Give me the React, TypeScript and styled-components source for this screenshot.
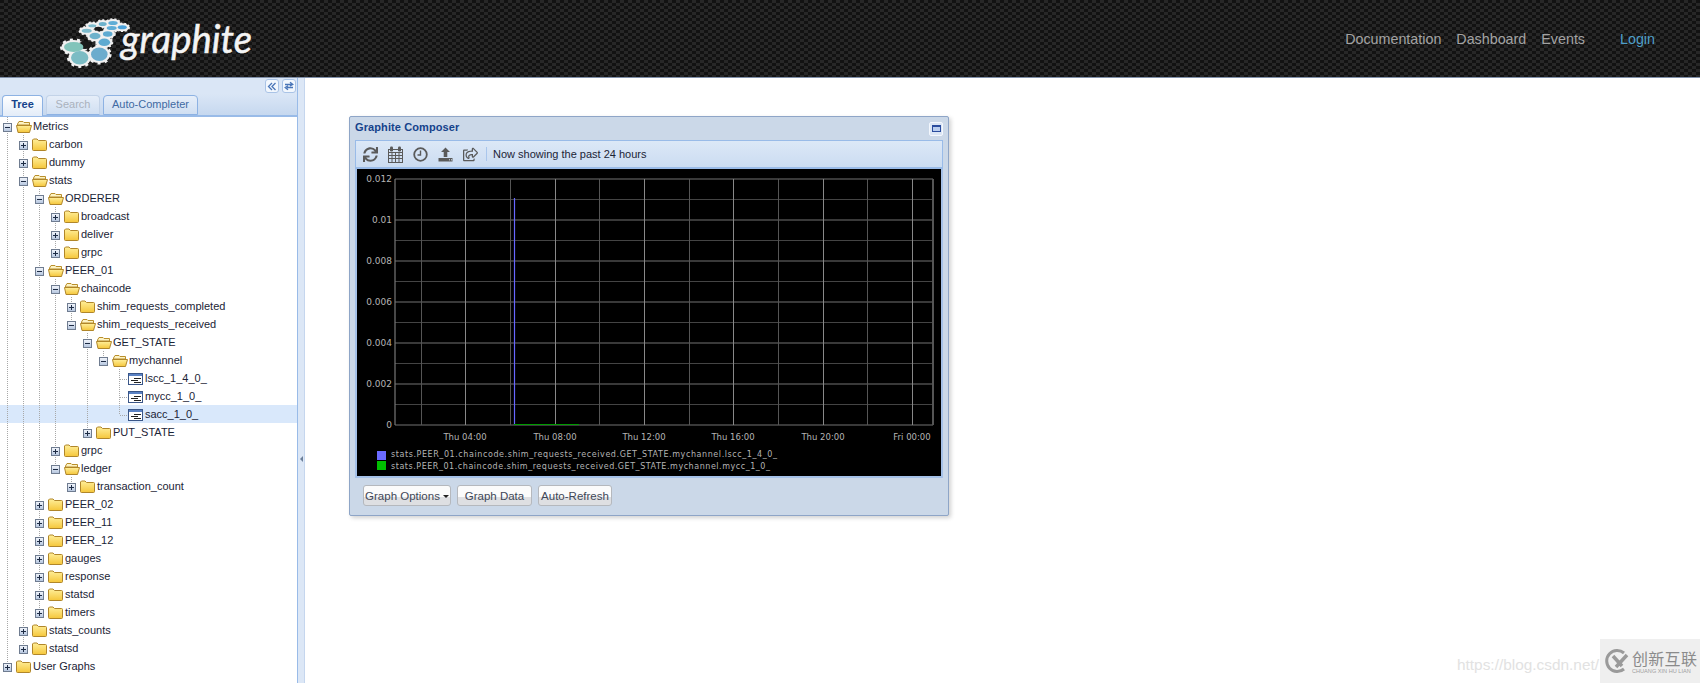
import React from 'react';
import styled, { createGlobalStyle } from 'styled-components';
import { FaSync, FaRegShareSquare } from 'react-icons/fa';

const GlobalStyle = createGlobalStyle`
  html, body {
    margin: 0;
    padding: 0;
    height: 100%;
    overflow: hidden;
    background: #fff;
    font-family: "Liberation Sans", Arial, sans-serif;
  }
`;

const Page = styled.div`
  position: relative;
  width: 1700px;
  height: 683px;
  display: flex;
  flex-direction: column;
  overflow: hidden;
`;

const Header = styled.header`
  height: 77px;
  flex: none;
  display: flex;
  align-items: center;
  justify-content: space-between;
  border-bottom: 1px solid #7f8fa9;
  background-color: #1c1c1c;
  background-image: repeating-conic-gradient(#272727 0 25%, #121212 0 50%);
  background-size: 8px 6px;
`;

const LogoSvg = styled.svg`
  width: 260px;
  height: 76px;
  flex: none;
`;

const Nav = styled.nav`
  display: flex;
  align-items: center;
  margin-right: 45px;
`;

const NavLink = styled.a<{ $login?: boolean }>`
  font-size: 14.3px;
  color: ${(p) => (p.$login ? '#4f9fc9' : '#a3a3a3')};
  margin-left: ${(p) => (p.$login ? '35px' : '15px')};
`;

const Body = styled.div`
  flex: 1;
  display: flex;
  min-height: 0;
`;

const Sidebar = styled.aside`
  width: 297px;
  flex: none;
  display: flex;
  flex-direction: column;
  border-right: 1px solid #99bbe8;
  background: #fff;
`;

const ToolStrip = styled.div`
  height: 16px;
  flex: none;
  display: flex;
  justify-content: flex-end;
  align-items: flex-start;
  gap: 3px;
  padding: 1px 1px 0 0;
  box-sizing: border-box;
  background: #dae6f6;
`;

const ToolButton = styled.div`
  width: 14px;
  height: 14px;
  box-sizing: border-box;
  border: 1px solid #a9c3e6;
  border-radius: 3px;
  background: #f2f7fd;
  display: flex;
  align-items: center;
  justify-content: center;
`;

const TabStrip = styled.div`
  height: 23px;
  flex: none;
  display: flex;
  align-items: flex-end;
  gap: 3px;
  padding-left: 2px;
  box-sizing: border-box;
  border-bottom: 2px solid #99bbe8;
  background: linear-gradient(#dae6f6, #c6d8ef);
`;

const Tab = styled.div<{ $active?: boolean; $disabled?: boolean; $w: number }>`
  width: ${(p) => p.$w}px;
  height: ${(p) => (p.$active ? 21 : 20)}px;
  box-sizing: border-box;
  border: 1px solid ${(p) => (p.$disabled ? '#c3d3e8' : '#8db2e3')};
  border-bottom: ${(p) => (p.$active ? 'none' : '1px solid #8db2e3')};
  border-radius: 4px 4px 0 0;
  text-align: center;
  font-size: 11px;
  line-height: 17px;
  font-weight: ${(p) => (p.$active ? 700 : 400)};
  color: ${(p) => (p.$active ? '#15428b' : p.$disabled ? '#aab2bd' : '#416aa3')};
  background: ${(p) =>
    p.$active ? 'linear-gradient(#fff, #e3ecf8)' : 'linear-gradient(#e6eef9, #d0dff2)'};
  margin-bottom: ${(p) => (p.$active ? -1 : 0)}px;
`;

const Tree = styled.div`
  flex: 1;
  overflow: hidden;
`;

const Row = styled.div<{ $selected?: boolean }>`
  height: 18px;
  display: flex;
  align-items: stretch;
  background: ${(p) => (p.$selected ? '#d9e8fb' : 'transparent')};
`;

const IndentCell = styled.div<{ $line: boolean }>`
  width: 16px;
  flex: none;
  background-image: ${(p) =>
    p.$line ? 'linear-gradient(#a8a8a8 50%, transparent 50%)' : 'none'};
  background-size: 1px 2px;
  background-position: 7px 0;
  background-repeat: repeat-y;
`;

const IconSvg = styled.svg`
  width: 16px;
  height: 18px;
  flex: none;
  display: block;
`;

const RowLabel = styled.span`
  font-size: 11px;
  line-height: 18px;
  color: #1b2436;
  margin-left: 1px;
  white-space: nowrap;
`;

const Splitter = styled.div`
  width: 6px;
  flex: none;
  display: flex;
  align-items: center;
  justify-content: center;
  background: #dce7f6;
  border-right: 1px solid #c5d6ee;
`;

const SplitArrow = styled.div`
  width: 0;
  height: 0;
  margin-top: 156px;
  border-top: 3px solid transparent;
  border-bottom: 3px solid transparent;
  border-right: 3px solid #6b7f99;
`;

const Main = styled.main`
  flex: 1;
  background: #fff;
  padding: 38px 0 0 44px;
`;

const Win = styled.section`
  width: 600px;
  height: 400px;
  box-sizing: border-box;
  border: 1px solid #8ea5c7;
  border-radius: 2px;
  background: #cbd8e8;
  box-shadow: 2px 2px 4px rgba(0, 0, 0, 0.18);
  padding: 0 5px;
`;

const WinHeader = styled.div`
  height: 23px;
  display: flex;
  align-items: center;
  justify-content: space-between;
`;

const WinTitle = styled.div`
  font-size: 11px;
  font-weight: 700;
  color: #15428b;
  letter-spacing: 0.1px;
  margin-top: -4px;
`;

const WinTool = styled.div`
  width: 14px;
  height: 14px;
  box-sizing: border-box;
  border: 1px solid #f3f7fd;
  border-radius: 2px;
  background: #dbe6f5;
  display: flex;
  align-items: center;
  justify-content: center;
`;

const WinToolGlyph = styled.div`
  width: 9px;
  height: 7px;
  box-sizing: border-box;
  border: 1px solid #2a4c9e;
  border-top-width: 2px;
  background: #b9cdee;
`;

const ToolBar = styled.div`
  height: 29px;
  box-sizing: border-box;
  display: flex;
  align-items: center;
  padding-left: 2px;
  border: 1px solid #99bbe8;
  border-bottom-width: 2px;
  background: linear-gradient(#dce8f7, #cbdcf1);
  color: #5a5a5a;
`;

const ToolIcon = styled.div`
  width: 25px;
  flex: none;
  display: flex;
  justify-content: center;
  align-items: center;
`;

const ToolSep = styled.div`
  width: 1px;
  height: 14px;
  margin: 0 6px 0 3px;
  background: #a9c6ec;
`;

const ToolText = styled.span`
  font-size: 11px;
  color: #1b2436;
`;

const ChartFrame = styled.div`
  height: 309px;
  box-sizing: border-box;
  border: solid #a5c1e8;
  border-width: 0 2px 2px 2px;
  background: #000;
`;

const ChartSvg = styled.svg`
  display: block;
  width: 584px;
  height: 307px;
`;

const ButtonRow = styled.div`
  display: flex;
  gap: 6px;
  padding: 7px 0 0 8px;
`;

const Button = styled.button<{ $w: number }>`
  width: ${(p) => p.$w}px;
  height: 21px;
  padding: 0;
  box-sizing: border-box;
  border: 1px solid #b5b8bd;
  border-radius: 3px;
  background: linear-gradient(#fbfbfb 0 60%, #dedfe2 60% 100%);
  font-family: "Liberation Sans", Arial, sans-serif;
  font-size: 11.5px;
  white-space: nowrap;
  color: #3f4757;
  display: flex;
  align-items: center;
  justify-content: center;
  gap: 3px;
`;

const Caret = styled.span`
  width: 0;
  height: 0;
  margin-top: 2px;
  border-left: 3px solid transparent;
  border-right: 3px solid transparent;
  border-top: 3px solid #222;
`;

const WatermarkText = styled.div`
  position: absolute;
  left: 1457px;
  top: 655px;
  font-size: 15.4px;
  line-height: 20px;
  color: #e2e2e2;
`;

const WatermarkBox = styled.div`
  position: absolute;
  right: 0;
  bottom: 0;
  width: 100px;
  height: 44px;
  display: flex;
  align-items: center;
  gap: 3px;
  padding-left: 3px;
  box-sizing: border-box;
  background: #efefef;
`;

const WatermarkStack = styled.div`
  display: flex;
  flex-direction: column;
  align-items: flex-start;
  gap: 2px;
  margin-top: 2px;
`;

const WatermarkCn = styled.div`
  font-family: "Noto Sans CJK SC", sans-serif;
  font-size: 16px;
  line-height: 15px;
  letter-spacing: 0.3px;
  color: #8b8b8b;
`;

const WatermarkEn = styled.div`
  font-size: 5.6px;
  line-height: 6px;
  white-space: nowrap;
  color: #a0a0a0;
`;

type Node = { name: string; open?: boolean; leaf?: boolean; children?: Node[] };

const folders = (...names: string[]): Node[] => names.map((name) => ({ name }));

const treeData: Node[] = [
  {
    name: 'Metrics',
    open: true,
    children: [
      { name: 'carbon' },
      { name: 'dummy' },
      {
        name: 'stats',
        open: true,
        children: [
          { name: 'ORDERER', open: true, children: folders('broadcast', 'deliver', 'grpc') },
          {
            name: 'PEER_01',
            open: true,
            children: [
              {
                name: 'chaincode',
                open: true,
                children: [
                  { name: 'shim_requests_completed' },
                  {
                    name: 'shim_requests_received',
                    open: true,
                    children: [
                      {
                        name: 'GET_STATE',
                        open: true,
                        children: [
                          {
                            name: 'mychannel',
                            open: true,
                            children: [
                              { name: 'lscc_1_4_0_', leaf: true },
                              { name: 'mycc_1_0_', leaf: true },
                              { name: 'sacc_1_0_', leaf: true },
                            ],
                          },
                        ],
                      },
                      { name: 'PUT_STATE' },
                    ],
                  },
                ],
              },
              { name: 'grpc' },
              { name: 'ledger', open: true, children: folders('transaction_count') },
            ],
          },
          ...folders('PEER_02', 'PEER_11', 'PEER_12', 'gauges', 'response', 'statsd', 'timers'),
        ],
      },
      { name: 'stats_counts' },
      { name: 'statsd' },
    ],
  },
  { name: 'User Graphs' },
];

const Elbow = ({ last, leaf, open }: { last: boolean; leaf?: boolean; open?: boolean }) => (
  <IconSvg viewBox="0 0 16 18">
    <line x1="7.5" y1="0" x2="7.5" y2={last ? 9 : 18} stroke="#a8a8a8" strokeDasharray="1 1" />
    {leaf && <line x1="8" y1="10.5" x2="16" y2="10.5" stroke="#a8a8a8" strokeDasharray="1 1" />}
    {!leaf && (
      <>
        <defs>
          <linearGradient id="expander" x1="0" y1="0" x2="0" y2="1">
            <stop offset="0" stopColor="#f4f7fc" />
            <stop offset="1" stopColor="#b3c4de" />
          </linearGradient>
        </defs>
        <rect x="3.5" y="6.5" width="8" height="8" fill="url(#expander)" stroke="#6f7c90" />
        <line x1="5" y1="10.5" x2="10" y2="10.5" stroke="#1d2b44" />
        {!open && <line x1="7.5" y1="8" x2="7.5" y2="13" stroke="#1d2b44" />}
      </>
    )}
  </IconSvg>
);

const FolderIcon = ({ open }: { open?: boolean }) => (
  <IconSvg viewBox="0 0 16 18">
    <defs>
      <linearGradient id="folder" x1="0" y1="0" x2="0" y2="1">
        <stop offset="0" stopColor="#ffef9a" />
        <stop offset="1" stopColor="#f5c63a" />
      </linearGradient>
    </defs>
    {open ? (
      <>
        <path d="M1.5 7 L3 4.5 H7 L8 5.5 H13.5 V8 H1.5 Z" fill="#fdf3c4" stroke="#b98f2b" />
        <path d="M0.5 8.5 H15.5 L13.5 15.5 H2 Z" fill="url(#folder)" stroke="#b0862a" />
      </>
    ) : (
      <path
        d="M0.5 5 L1.5 4 H5 L6.5 5.5 H13.5 Q14.5 5.5 14.5 6.5 V14.5 Q14.5 15.5 13.5 15.5 H1.5 Q0.5 15.5 0.5 14.5 Z"
        fill="url(#folder)"
        stroke="#b0862a"
      />
    )}
  </IconSvg>
);

const LeafIcon = () => (
  <IconSvg viewBox="0 0 16 18">
    <rect x="0.5" y="4.5" width="14" height="11" fill="#fff" stroke="#3a5688" />
    <rect x="1" y="5" width="13" height="2" fill="#5a82c4" />
    <path d="M6 9.5 H13 M3 11.5 H10 M6 13.5 H13" stroke="#222" fill="none" />
  </IconSvg>
);

const TreeRows = ({ nodes, trail }: { nodes: Node[]; trail: boolean[] }) => (
  <>
    {nodes.map((node, i) => {
      const last = i === nodes.length - 1;
      return (
        <React.Fragment key={node.name + i}>
          <Row $selected={node.name === 'sacc_1_0_'}>
            {trail.map((line, idx) => (
              <IndentCell key={idx} $line={line} />
            ))}
            <Elbow last={last} leaf={node.leaf} open={node.open} />
            {node.leaf ? <LeafIcon /> : <FolderIcon open={node.open} />}
            <RowLabel>{node.name}</RowLabel>
          </Row>
          {node.children && <TreeRows nodes={node.children} trail={[...trail, !last]} />}
        </React.Fragment>
      );
    })}
  </>
);

const gears = [
  { cx: 73.7, cy: 46, rx: 9.7, ry: 5, fill: '#82c4ba', big: true },
  { cx: 79.7, cy: 56.7, rx: 8.7, ry: 6.7, fill: '#7cbcc4', big: true },
  { cx: 99.3, cy: 53.3, rx: 8.3, ry: 6.7, fill: '#6caccd', big: true },
  { cx: 104.3, cy: 41.3, rx: 5.8, ry: 3.7, fill: '#5eaad1' },
  { cx: 95, cy: 35, rx: 5.5, ry: 3.3, fill: '#6db2cc' },
  { cx: 107.7, cy: 33, rx: 4.8, ry: 2.7, fill: '#5eaad1' },
  { cx: 86.7, cy: 29.7, rx: 5, ry: 2, fill: '#7dbbcc' },
  { cx: 111.7, cy: 27, rx: 5, ry: 2, fill: '#5fadd6' },
  { cx: 92.3, cy: 24.7, rx: 4, ry: 1.5, fill: '#7dbbcc' },
  { cx: 102.7, cy: 23, rx: 4, ry: 2, fill: '#6db2cc' },
  { cx: 113, cy: 22, rx: 4.7, ry: 2, fill: '#5fadd6' },
  { cx: 122.3, cy: 26.3, rx: 4.5, ry: 2, fill: '#4ca2da' },
];

const Logo = () => (
  <LogoSvg viewBox="0 0 260 76">
    {gears.map((g, i) => (
      <ellipse
        key={i}
        cx={g.cx}
        cy={g.cy}
        rx={g.rx + 2.5}
        ry={g.ry + 2}
        fill="#f0f0f0"
        stroke="#f0f0f0"
        strokeWidth={g.big ? 3 : 1.5}
        strokeDasharray={g.big ? '3 4' : '2 2'}
      />
    ))}
    <ellipse cx="85" cy="44" rx="6" ry="4" fill="#1a1a1a" />
    <ellipse cx="98.3" cy="27.7" rx="4" ry="2" fill="#1a1a1a" />
    {gears.map((g, i) => (
      <ellipse key={i} cx={g.cx} cy={g.cy} rx={g.rx} ry={g.ry} fill={g.fill} />
    ))}
    <text
      x="121"
      y="52"
      fontFamily="Lato, sans-serif"
      fontStyle="italic"
      fontSize="38"
      fill="#f4f4f4"
      stroke="#f4f4f4"
      strokeWidth="0.5"
      textLength="131"
      lengthAdjust="spacingAndGlyphs"
    >
      graphite
    </text>
  </LogoSvg>
);

const CollapseGlyph = () => (
  <svg width="10" height="9" viewBox="0 0 10 9">
    <path d="M5 1 L1.5 4.5 L5 8 M8.5 1 L5 4.5 L8.5 8" fill="none" stroke="#4a76b8" strokeWidth="1.3" />
  </svg>
);

const RefreshGlyph = () => (
  <svg width="10" height="10" viewBox="0 0 10 10">
    <path d="M1 3.5 H7.5 M6 1.2 L8.8 3.5 L6 5 M9 6.5 H2.5 M4 4.8 L1.2 6.5 L4 8.8" fill="none" stroke="#4a76b8" strokeWidth="1.3" />
  </svg>
);

const CalendarIcon = () => (
  <svg width="15" height="17" viewBox="0 0 15 17" fill="none" stroke="#5a5a5a">
    <rect x="0.5" y="3.5" width="14" height="13" />
    <path d="M0.5 6.5 H14.5 M0.5 9.5 H14.5 M0.5 12.5 H14.5 M4 6.5 V16.5 M7.5 6.5 V16.5 M11 6.5 V16.5" />
    <rect x="2" y="0.5" width="3" height="5" rx="1.2" fill="#5a5a5a" stroke="none" />
    <rect x="10" y="0.5" width="3" height="5" rx="1.2" fill="#5a5a5a" stroke="none" />
  </svg>
);

const ClockIcon = () => (
  <svg width="15" height="15" viewBox="0 0 15 15" fill="none" stroke="#5a5a5a">
    <circle cx="7.5" cy="7.5" r="6.3" strokeWidth="1.8" />
    <path d="M7.5 3.5 V8 H4.5" strokeWidth="1.4" />
  </svg>
);

const UploadIcon = () => (
  <svg width="15" height="15" viewBox="0 0 15 15" fill="#5a5a5a">
    <path d="M7.5 0.5 L12 5 H9.3 V10 H5.7 V5 H3 Z" />
    <path d="M0.5 11 H14.5 V14.5 H0.5 Z" />
    <rect x="11" y="12.3" width="1" height="1" fill="#dce8f7" />
    <rect x="13" y="12.3" width="1" height="1" fill="#dce8f7" />
  </svg>
);

const ys = [0, 1, 2, 3, 4, 5, 6].map((i) => 10 + 41 * i);
const minorYs = [0, 1, 2, 3, 4, 5].map((i) => 30.5 + 41 * i);
const majorXs = [108, 198, 287, 376, 466, 555];
const minorXs = [64, 153, 242, 332, 421, 510];
const yLabels = ['0.012', '0.01', '0.008', '0.006', '0.004', '0.002', '0'];
const xLabels = ['Thu 04:00', 'Thu 08:00', 'Thu 12:00', 'Thu 16:00', 'Thu 20:00', 'Fri 00:00'];

const Chart = () => (
  <ChartSvg viewBox="0 0 584 307">
    {minorYs.map((y) => (
      <line key={y} x1="38" x2="576" y1={y} y2={y} stroke="#444" />
    ))}
    {ys.map((y) => (
      <line key={y} x1="38" x2="576" y1={y} y2={y} stroke="#4c4c4c" strokeWidth="1.4" />
    ))}
    {minorXs.map((x) => (
      <line key={x} x1={x + 0.5} x2={x + 0.5} y1="10" y2="256" stroke="#555" />
    ))}
    {majorXs.map((x) => (
      <line key={x} x1={x + 0.5} x2={x + 0.5} y1="10" y2="256" stroke="#888" />
    ))}
    <line x1="38" x2="38" y1="10" y2="256" stroke="#777" strokeWidth="1.2" />
    <line x1="576" x2="576" y1="10" y2="256" stroke="#555" strokeWidth="2" />
    <line x1="157.5" x2="157.5" y1="29" y2="256" stroke="#6666ff" strokeWidth="1.2" />
    <line x1="157" x2="222" y1="255.5" y2="255.5" stroke="#009a00" />
    <g fontFamily='"DejaVu Sans", sans-serif' fill="#b4b4b4">
      {yLabels.map((label, i) => (
        <text key={label} x="35" y={ys[i] + 3} fontSize="9" textAnchor="end">
          {label}
        </text>
      ))}
      {xLabels.map((label, i) => (
        <text key={label} x={majorXs[i]} y="271" fontSize="8.5" textAnchor="middle">
          {label}
        </text>
      ))}
      <rect x="20" y="282" width="9" height="9" fill="#6a6aff" />
      <rect x="20" y="292" width="9" height="9" fill="#00c000" />
      <text x="34" y="288" fontSize="8" textLength="386">
        stats.PEER_01.chaincode.shim_requests_received.GET_STATE.mychannel.lscc_1_4_0_
      </text>
      <text x="34" y="300" fontSize="8" textLength="379">
        stats.PEER_01.chaincode.shim_requests_received.GET_STATE.mychannel.mycc_1_0_
      </text>
    </g>
  </ChartSvg>
);

const WatermarkLogo = () => (
  <svg width="26" height="26" viewBox="0 0 26 26" fill="none" stroke="#9a9a9a" strokeWidth="3">
    <path d="M21 5 A10.5 10.5 0 1 0 21 21" />
    <path d="M10 8 L19 18 M24 7 L13 19" strokeWidth="3.5" />
  </svg>
);

const App = () => (
  <Page>
    <GlobalStyle />
    <Header>
      <Logo />
      <Nav>
        <NavLink>Documentation</NavLink>
        <NavLink>Dashboard</NavLink>
        <NavLink>Events</NavLink>
        <NavLink $login>Login</NavLink>
      </Nav>
    </Header>
    <Body>
      <Sidebar>
        <ToolStrip>
          <ToolButton>
            <CollapseGlyph />
          </ToolButton>
          <ToolButton>
            <RefreshGlyph />
          </ToolButton>
        </ToolStrip>
        <TabStrip>
          <Tab $active $w={41}>Tree</Tab>
          <Tab $disabled $w={54}>Search</Tab>
          <Tab $w={95}>Auto-Completer</Tab>
        </TabStrip>
        <Tree>
          <TreeRows nodes={treeData} trail={[]} />
        </Tree>
      </Sidebar>
      <Splitter>
        <SplitArrow />
      </Splitter>
      <Main>
        <Win>
          <WinHeader>
            <WinTitle>Graphite Composer</WinTitle>
            <WinTool>
              <WinToolGlyph />
            </WinTool>
          </WinHeader>
          <ToolBar>
            <ToolIcon>
              <FaSync size={15} />
            </ToolIcon>
            <ToolIcon>
              <CalendarIcon />
            </ToolIcon>
            <ToolIcon>
              <ClockIcon />
            </ToolIcon>
            <ToolIcon>
              <UploadIcon />
            </ToolIcon>
            <ToolIcon>
              <FaRegShareSquare size={15} />
            </ToolIcon>
            <ToolSep />
            <ToolText>Now showing the past 24 hours</ToolText>
          </ToolBar>
          <ChartFrame>
            <Chart />
          </ChartFrame>
          <ButtonRow>
            <Button $w={88}>
              Graph Options
              <Caret />
            </Button>
            <Button $w={75}>Graph Data</Button>
            <Button $w={74}>Auto-Refresh</Button>
          </ButtonRow>
        </Win>
      </Main>
    </Body>
    <WatermarkText>https://blog.csdn.net/</WatermarkText>
    <WatermarkBox>
      <WatermarkLogo />
      <WatermarkStack>
        <WatermarkCn>创新互联</WatermarkCn>
        <WatermarkEn>CHUANG XIN HU LIAN</WatermarkEn>
      </WatermarkStack>
    </WatermarkBox>
  </Page>
);

export default App;
